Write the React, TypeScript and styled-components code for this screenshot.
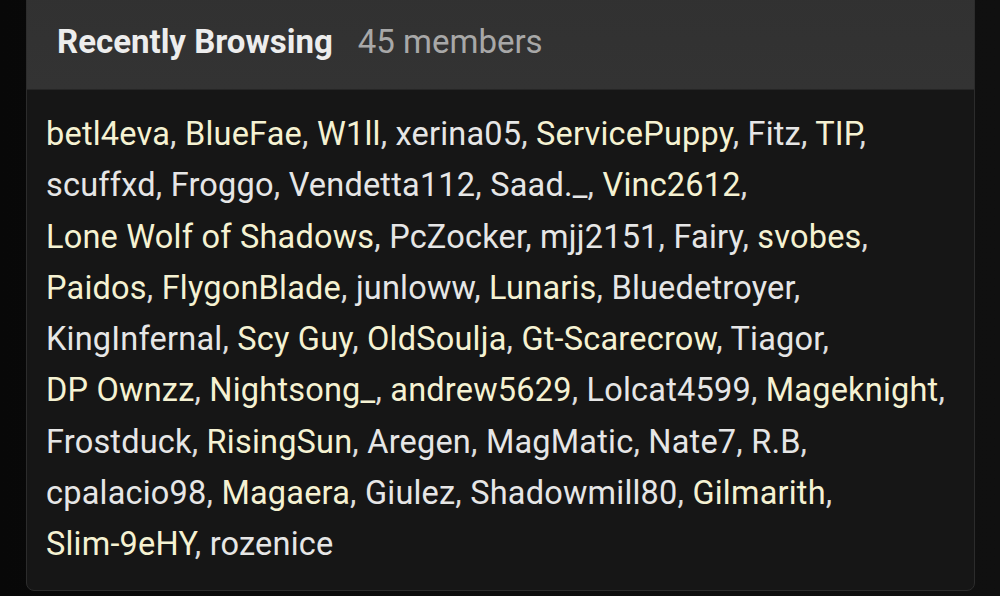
import React from "react";
import styled, { createGlobalStyle } from "styled-components";

const Global = createGlobalStyle`
  html, body { margin: 0; padding: 0; background: #0c0c0c; }
  body { font-family: Roboto, "Noto Sans", sans-serif; -webkit-font-smoothing: antialiased; }
`;

const Page = styled.div`
  width: 1000px;
  height: 596px;
  overflow: hidden;
  padding: 0 25px 0 26px;
  box-sizing: border-box;
  background: linear-gradient(90deg, #080808 0%, #0e0e0e 50%, #101010 100%);
`;

const Card = styled.section`
  margin-top: -12px;
  border: 1px solid #2c2c2c;
  border-radius: 8px;
  background: #161616;
  overflow: hidden;
`;

const Header = styled.header`
  display: flex;
  align-items: center;
  gap: 25px;
  height: 101px;
  padding: 4px 30px 0 30px;
  box-sizing: border-box;
  background: linear-gradient(180deg, #313131 0%, #333333 100%);
  border-bottom: 1px solid #262626;
`;

const Title = styled.h2`
  margin: 0;
  font-size: 33px;
  font-weight: 700;
  color: #ededed;
`;

const Count = styled.span`
  font-size: 33px;
  font-weight: 400;
  color: #a8a8a8;
`;

const Body = styled.p`
  margin: 0;
  padding: 19px 18px 19px 19px;
  font-size: 32.5px;
  letter-spacing: 0.2px;
  line-height: 51.3px;
  color: #e4e4e4;
`;

const Entry = styled.span`
  white-space: nowrap;
  color: #dcdcdc;
`;

const Name = styled.span<{ $hl?: boolean }>`
  color: ${(p) => (p.$hl ? "#f5f2d2" : "#e6e6e6")};
`;

const names: [string, boolean][] = [
  ["betl4eva", true],
  ["BlueFae", true],
  ["W1ll", true],
  ["xerina05", false],
  ["ServicePuppy", true],
  ["Fitz", false],
  ["TIP", true],
  ["scuffxd", false],
  ["Froggo", false],
  ["Vendetta112", false],
  ["Saad._", false],
  ["Vinc2612", true],
  ["Lone Wolf of Shadows", true],
  ["PcZocker", false],
  ["mjj2151", false],
  ["Fairy", false],
  ["svobes", true],
  ["Paidos", true],
  ["FlygonBlade", true],
  ["junloww", false],
  ["Lunaris", true],
  ["Bluedetroyer", false],
  ["KingInfernal", false],
  ["Scy Guy", true],
  ["OldSoulja", true],
  ["Gt-Scarecrow", true],
  ["Tiagor", false],
  ["DP Ownzz", true],
  ["Nightsong_", true],
  ["andrew5629", true],
  ["Lolcat4599", false],
  ["Mageknight", true],
  ["Frostduck", false],
  ["RisingSun", true],
  ["Aregen", false],
  ["MagMatic", false],
  ["Nate7", false],
  ["R.B", false],
  ["cpalacio98", false],
  ["Magaera", true],
  ["Giulez", false],
  ["Shadowmill80", false],
  ["Gilmarith", true],
  ["Slim-9eHY", true],
  ["rozenice", false],
];

export default function App() {
  return (
    <>
      <Global />
      <Page>
        <Card>
          <Header>
            <Title>Recently Browsing</Title>
            <Count>45 members</Count>
          </Header>
          <Body>
            {names.map(([n, hl], i) => (
              <React.Fragment key={n}>
                <Entry>
                  <Name $hl={hl}>{n}</Name>
                  {i < names.length - 1 ? "," : ""}
                </Entry>
                {i < names.length - 1 ? " " : ""}
              </React.Fragment>
            ))}
          </Body>
        </Card>
      </Page>
    </>
  );
}
